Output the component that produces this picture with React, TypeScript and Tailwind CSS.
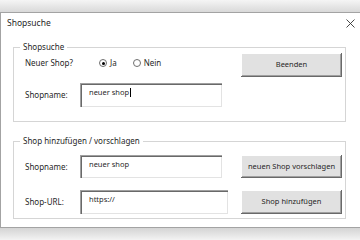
import React from "react";

const raised =
  "bg-[#e1e1e1] shadow-[inset_-1px_-1px_#696969,inset_1px_1px_#ffffff,inset_-2px_-2px_#a0a0a0]";
const sunken =
  "bg-white shadow-[inset_1px_1px_#a0a0a0,inset_2px_2px_#696969,inset_-1px_-1px_#e3e3e3]";

function Button({ label, className = "" }: { label: string; className?: string }) {
  return (
    <div
      className={`w-[101px] flex items-center justify-center text-[7.5px] ${raised} ${className}`}
    >
      {label}
    </div>
  );
}

function Field({
  value,
  width,
  height,
  cursor,
}: {
  value: string;
  width: string;
  height: string;
  cursor?: boolean;
}) {
  return (
    <div className={`${width} ${height} ${sunken} pl-[9px] pt-[4px] text-[7.5px] leading-[10px]`}>
      <span className="inline-flex items-center">
        {value}
        {cursor && <span className="w-px h-[9px] bg-black ml-[1px]" />}
      </span>
    </div>
  );
}

function Radio({ checked, label }: { checked?: boolean; label: string }) {
  return (
    <div className="flex items-center gap-[3px]">
      <span className="w-[8px] h-[8px] rounded-full border border-[#6f6f6f] bg-white flex items-center justify-center">
        {checked && <span className="w-[3px] h-[3px] rounded-full bg-black" />}
      </span>
      <span>{label}</span>
    </div>
  );
}

export default function App() {
  return (
    <div className="w-[360px] h-[240px] overflow-hidden bg-[#f2f2f2] font-['Noto_Sans',sans-serif] text-[8px] text-[#1f1f1f]">
      <div className="h-[12px] bg-gradient-to-b from-[#f5f5f5] to-[#d9d9d9]" />

      <div className="h-[216px] bg-white border-t border-l border-b border-[#a3a3a3] flex flex-col">
        {/* title bar */}
        <div className="h-[20px] flex items-center justify-between pl-[6px] pr-[5px]">
          <span className="text-[8.5px]">Shopsuche</span>
          <svg width="9" height="9" viewBox="0 0 9 9" className="text-[#333]">
            <path d="M0.5 0.5 L8.5 8.5 M8.5 0.5 L0.5 8.5" stroke="currentColor" strokeWidth="0.9" />
          </svg>
        </div>

        {/* group 1 */}
        <div className="relative ml-[12px] mt-[14px] w-[333px] h-[75px] border border-[#d5d5d5] pl-[11px] pr-[3px] pt-[5px] flex flex-col gap-[6px]">
          <span className="absolute left-[6px] top-[-6px] bg-white px-[3px] leading-[10px]">
            Shopsuche
          </span>
          <div className="h-[24px] flex items-start">
            <span className="w-[74px] mt-[4px]">Neuer Shop?</span>
            <div className="flex gap-[16px] mt-[4px]">
              <Radio checked label="Ja" />
              <Radio label="Nein" />
            </div>
            <Button label="Beenden" className="ml-auto h-[24px]" />
          </div>
          <div className="h-[24px] flex items-center">
            <span className="w-[55px]">Shopname:</span>
            <Field value="neuer shop" width="w-[142px]" height="h-[24px]" cursor />
          </div>
        </div>

        {/* group 2 */}
        <div className="relative ml-[12px] mt-[19px] w-[333px] h-[78px] border border-[#d5d5d5] pl-[11px] pr-[3px] pt-[13px] flex flex-col gap-[12px]">
          <span className="absolute left-[6px] top-[-6px] bg-white px-[3px] leading-[10px]">
            Shop hinzufügen / vorschlagen
          </span>
          <div className="h-[23px] flex items-center">
            <span className="w-[55px]">Shopname:</span>
            <Field value="neuer shop" width="w-[142px]" height="h-[23px]" />
            <Button label="neuen Shop vorschlagen" className="ml-auto h-[23px]" />
          </div>
          <div className="h-[24px] flex items-center">
            <span className="w-[55px]">Shop-URL:</span>
            <Field value="https://" width="w-[148px]" height="h-[24px]" />
            <Button label="Shop hinzufügen" className="ml-auto h-[24px]" />
          </div>
        </div>
      </div>

      <div className="h-[12px] bg-gradient-to-b from-[#d4d4d4] to-[#f3f3f3]" />
    </div>
  );
}
